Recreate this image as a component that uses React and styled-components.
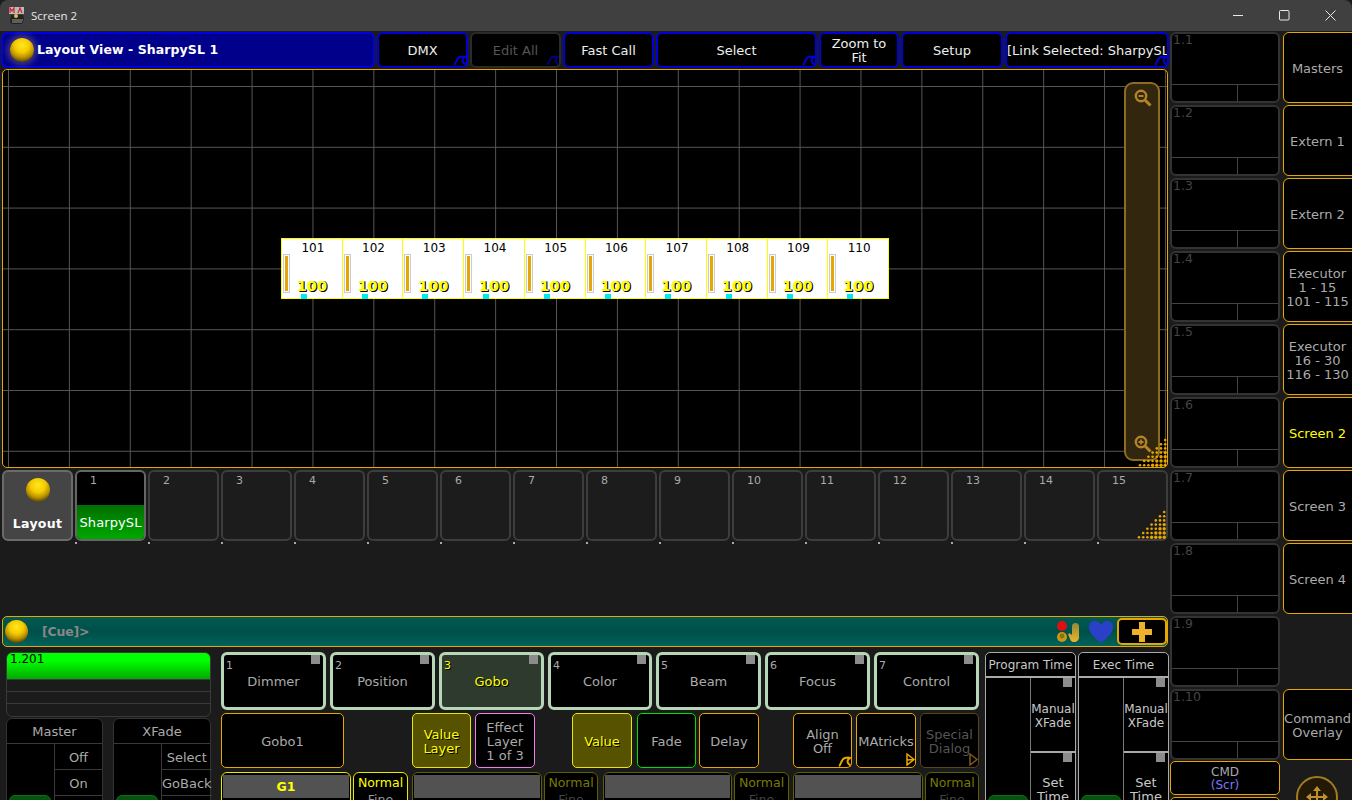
import React from 'react';
import styled, { createGlobalStyle } from 'styled-components';

const Global = createGlobalStyle`
  html, body { margin: 0; padding: 0; background: #1b1b1b; overflow: hidden; }
  * { box-sizing: border-box; }
`;

const AMBER = '#e8a600';

const Shell = styled.div`
  width: 1352px; height: 800px; overflow: hidden; display: flex; flex-direction: column;
  background: #1b1b1b; color: #aaa; font: 13px/14px "DejaVu Sans", sans-serif;
`;
const TitleBar = styled.header`
  height: 31px; flex: none; background: #404040; border-radius: 8px 8px 0 0; display: flex; align-items: center;
  padding-left: 9px; color: #e8e8e8; font: 11.5px "Open Sans", sans-serif;
`;
const AppName = styled.span`margin-left: 6px; flex: 1;`;
const WinBtn = styled.button`
  width: 46px; height: 31px; background: none; border: 0; padding: 0 0 0 3px; color: #e8e8e8; display: flex; align-items: center; justify-content: center;
`;
const Body = styled.div`display: flex; flex: none; padding-top: 1px; height: 769px;`;
const LeftPane = styled.main`width: 1170px; flex: none; display: flex; flex-direction: column;`;
const TopBar = styled.nav`display: flex; height: 36px; padding-left: 1px; gap: 2px; flex: none;`;
const TitleBtn = styled.div`
  width: 374px; flex: none; border: 2px solid #0000e0; border-radius: 6px; background: #00008b; display: flex; align-items: center; padding-left: 7px;
  color: #fff; font-weight: bold; letter-spacing: 0.08px; font-size: 12.5px;
`;
const TopBtn = styled.button`
  position: relative; width: ${p => p.$w}px; flex: none; padding: 2px 0 0; background: #000; border: 2px solid ${p => p.$off ? '#2a2a2a' : '#0000d8'}; border-radius: 6px;
  color: ${p => p.$off ? '#555' : '#eee'}; font: 13px/14px "DejaVu Sans", sans-serif; white-space: ${p => p.$clip ? 'nowrap' : 'pre-line'}; overflow: hidden;
  text-align: ${p => p.$clip ? 'left' : 'center'};
`;
const Curl = styled.svg`position: absolute; right: 0; bottom: 0; width: 13px; height: 11px; fill: none; stroke-width: 2;`;
const Ball = styled.span`
  display: block; flex: none; width: ${p => p.$s}px; height: ${p => p.$s}px; border-radius: 50%;
  background: radial-gradient(ellipse 72% 72% at 50% 30%, #ffe820 0%, #f5cb00 42%, #b89000 72%, #4a3c08 100%);
  ${p => p.$glow && 'box-shadow: 0 0 6px 3px rgba(150,130,120,.45);'}
`;
const TitleLabel = styled.span`margin-left: 3px;`;

const Canvas = styled.section`
  position: relative; flex: none; margin: 1px 0 0 2px; width: 1166px; height: 399px; overflow: hidden; border: 1px solid ${AMBER}; border-radius: 5px;
  background-color: #000;
  background-image: linear-gradient(to right, #555 1px, transparent 1px), linear-gradient(to bottom, #555 1px, transparent 1px);
  background-size: 60.9px 60.8px;
  background-position: 5px 16px;
`;
const FixtureRow = styled.div`
  position: absolute; left: 278px; top: 168px; width: 608px; height: 61px; display: flex; border: 1px solid #ffff00;
`;
const Fixture = styled.div`
  position: relative; flex: 1; background: #fff; border-right: 1px solid #ffff00; color: #000; text-align: center; padding: 2px 0 0 2px; font-size: 12px;
  &:last-child { border-right: 0; }
`;
const Level = styled.i`
  position: absolute; left: 1px; top: 15px; width: 7px; height: 39px; border: 1px solid #ccc; background: #e5a60a;
  box-shadow: inset 0 0 0 1px #fff;
`;
const Value = styled.b`
  position: absolute; left: 0; right: 0; top: 39px; text-align: center; color: #ff0; font: bold 14.5px/16px "DejaVu Sans", sans-serif;
  text-shadow: 1px 1px 0 #000, 1px 0 0 #333;
`;
const Tick = styled.i`position: absolute; bottom: -1px; left: 19px; width: 6px; height: 5px; background: #00eaea;`;
const ScrollStrip = styled.div`
  position: absolute; top: 12px; right: 7px; width: 36px; height: 379px; border: 2px solid #8d6c22; border-radius: 9px; background: #33260f;
  display: flex; flex-direction: column; justify-content: space-between; align-items: center; padding: 5px 0 6px 2px;
`;
const Corner = styled.svg`position: absolute; right: 0; bottom: 0; width: 30px; height: 30px; fill: ${AMBER};`;

const PresetRow = styled.div`display: flex; gap: 2px; margin: 2px 0 0 2px; height: 71px; flex: none;`;
const PresetType = styled.button`
  width: 71px; flex: none; background: #454545; border: 2px solid #6b6b6b; border-radius: 6px; display: flex; flex-direction: column; align-items: center; padding: 6px 0 0;
  color: #fff; font: bold 12.5px/14px "DejaVu Sans", sans-serif; gap: 15px; letter-spacing: .3px;
`;
const Preset = styled.div`
  position: relative; width: 71px; flex: none; background: #1c1c1c; border: 2px solid #3d3d3d; border-radius: 6px; color: #aaa; padding: 2px 0 0 13px; font-size: 11px; line-height: 13px;
  &::after { content: ''; position: absolute; left: -2px; bottom: -5px; width: 2px; height: 2px; background: #aaa; }
  ${p => p.$on && 'background: #000; border-color: #666;'}
`;
const PresetName = styled.div`
  position: absolute; left: 0; right: 0; bottom: 0; height: 34px; background: linear-gradient(#006e00, #00a800); color: #fff; font-size: 13px; line-height: 35px; text-align: center; border-radius: 0 0 4px 4px; letter-spacing: .1px;
`;
const CmdBar = styled.div`
  margin: 75px 0 0 2px; width: 1166px; height: 31px; flex: none; display: flex; align-items: center; border: 1px solid ${AMBER}; border-radius: 5px; padding-left: 2px;
  background: linear-gradient(#005a53, #00504a 50%, #00625a); color: #888; font-weight: bold; font-size: 12.5px;
`;
const Prompt = styled.span`margin-left: 14px; flex: 1; letter-spacing: -.2px;`;
const PlusBtn = styled.button`
  width: 50px; height: 27px; margin: 0 0 0 3px; background: #000; border: 2px solid ${AMBER}; border-radius: 5px; padding: 0; display: flex; align-items: center; justify-content: center;
`;

const Bottom = styled.div`display: flex; flex: none; margin-top: 5px; padding-left: 6px; height: 150px; overflow: hidden;`;
const LeftBlock = styled.div`width: 205px; flex: none; display: flex; flex-direction: column; gap: 1px;`;
const ExecBar = styled.div`
  height: 65px; border: 1px solid #3a3a3a; border-radius: 6px; overflow: hidden; display: grid; grid-template-rows: 26px 12px 12px 1fr; flex: none;
`;
const ExecBarTop = styled.div`background: linear-gradient(#00ff00 30%, #00a800); color: #000; font-size: 12px; padding-left: 3px; line-height: 12px;`;
const ExecBarLine = styled.div`border-top: 1px solid #3a3a3a;`;
const Pair = styled.div`display: flex; gap: 10px;`;
const Group = styled.div`
  width: ${p => p.$w}px; flex: none; height: 110px; background: #000; border: 1px solid #333; border-radius: 6px 6px 0 0; display: flex; flex-direction: column;
`;
const GroupHead = styled.div`height: 25px; flex: none; text-align: center; line-height: 26px; border-bottom: 1px solid #3a3a3a;`;
const GroupBody = styled.div`display: grid; grid-template-columns: 48px 1fr; flex: 1;`;
const FaderCol = styled.div`position: relative; border-right: 1px solid #3a3a3a;`;
const Handle = styled.i`position: absolute; left: 2px; right: 3px; top: 51px; height: 30px; border-radius: 6px 6px 0 0; background: #06530f; border: 1px solid #0d7018;`;
const SideCol = styled.div`display: flex; flex-direction: column;`;
const SideBtn = styled.div`height: 26px; flex: none; border-bottom: 1px solid #3a3a3a; text-align: center; line-height: 27px; white-space: nowrap; overflow: hidden;`;

const Center = styled.div`width: 758px; margin-left: 10px; flex: none; display: flex; flex-direction: column;`;
const TabRow = styled.div`display: flex; gap: 4px; height: 58px; flex: none;`;
const Tab = styled.div`
  position: relative; width: ${p => p.$w}px; flex: none; background: ${p => p.$on ? '#2f3a2f' : '#000'}; border: 3px solid #b7d6b7; border-radius: 6px; color: ${p => p.$on ? '#ff0' : '#aaa'};
  text-align: center; line-height: 54px; ${p => p.$on && 'text-shadow: 1px 1px 0 #000;'}
`;
const TabNum = styled.span`position: absolute; left: 2px; top: 5px; font-size: 11px; line-height: 12px;`;
const Flag = styled.i`position: absolute; top: 0; right: 3px; width: 9px; height: 9px; background: #8c8c8c;`;
const BtnRow = styled.div`display: flex; height: 55px; margin-top: 3px; flex: none;`;
const Btn = styled.div`
  position: relative; width: ${p => p.$w}px; margin-left: ${p => p.$gap || 0}px; flex: none; display: flex; align-items: center; justify-content: center; text-align: center; padding-top: 2px;
  border: 1.5px solid ${p => p.$c || AMBER}; border-radius: 5px; background: ${p => p.$on ? '#575200' : '#000'}; color: ${p => p.$on ? '#ff0' : p.$dim ? '#555' : '#aaa'};
  ${p => p.$on && 'text-shadow: 1px 1px 0 #000;'} line-height: 14px; font-size: 13px; white-space: pre-line;
`;
const Tri = styled.svg`position: absolute; right: -1px; bottom: 1px; width: 10px; height: 13px; fill: none; stroke-width: 1.5;`;
const ValRow = styled.div`display: flex; margin-top: 4px; height: 60px; flex: none;`;
const ValMain = styled.div`
  width: ${p => p.$w}px; margin-left: ${p => p.$gap || 0}px; flex: none; border: 1.5px solid ${p => p.$on ? '#e8e800' : '#5f5f00'}; border-radius: 6px; background: #000; padding: 2px 1px 0; height: 60px; color: #ff0; font-weight: bold;
`;
const ValFill = styled.div`height: 23px; background: #525252; text-align: center; line-height: 24px; font-size: 12.5px;`;
const ValMode = styled.div`
  width: ${p => p.$w}px; margin-left: 2px; flex: none; border: 1.5px solid ${p => p.$on ? '#e8e800' : '#5f5f00'}; border-radius: 6px; background: #000; color: ${p => p.$on ? '#ff0' : '#7a7a00'};
  text-align: center; padding-top: 1px; line-height: 17px; font-size: 12.5px;
`;
const ModeSub = styled.div`color: ${p => p.$on ? '#999' : '#444'};`;

const TimeBlock = styled.div`margin-left: 6px; width: 184px; flex: none; display: flex; gap: 2px;`;
const TimePanel = styled.div`
  width: 91px; height: 170px; flex: none; background: #000; border: 1px solid #aaa; border-radius: 5px; display: flex; flex-direction: column; color: #c8c8c8;
`;
const TimeHead = styled.div`height: 25px; flex: none; text-align: center; line-height: 25px; border-bottom: 2px solid #aaa; font-size: 12px; white-space: nowrap;`;
const TimeBody = styled.div`display: grid; grid-template-columns: 45px 1fr; flex: 1;`;
const TimeFader = styled.div`position: relative; border-right: 1px solid #777;`;
const TimeHandle = styled(Handle)`left: 2px; right: 2px; top: 117px;`;
const TimeBtn = styled.div`
  position: relative; height: 75px; border-bottom: 2px solid #aaa; display: flex; align-items: center; justify-content: center; text-align: center; font-size: 12px; line-height: 14px; padding-top: 2px;
  &:last-child { padding-top: 23px; align-items: flex-start; border: 0; line-height: 14px; font-size: 13px; }
`;
const TimeFlag = styled(Flag)`right: 3px;`;

const ExecCol = styled.div`width: 110px; margin-left: 0; flex: none; display: flex; flex-direction: column; gap: 2px;`;
const ExecCell = styled.div`
  height: 71px; flex: none; background: #000; border: 2px solid #333; border-radius: 6px; display: flex; flex-direction: column; color: #444; font-size: 12.5px;
`;
const ExecNum = styled.div`flex: 1; padding: 0 0 0 1px; line-height: 11px;`;
const ExecFoot = styled.div`height: 17px; flex: none; border-top: 1px solid #444; display: grid; grid-template-columns: 66px 1fr;`;
const ExecDiv = styled.div`border-right: 1px solid #444;`;
const Cmd = styled.div`
  height: 34px; margin-top: -1px; flex: none; background: #000; border: 1.5px solid ${AMBER}; border-radius: 5px; text-align: center; font-size: 12px; line-height: 13px; padding-top: 4px; color: #aaa;
`;
const Scr = styled.div`color: #7a7aff;`;
const CmdNext = styled.div`height: 30px; flex: none; background: #000; border: 1.5px solid ${AMBER}; border-radius: 5px;`;
const ViewCol = styled.div`width: 70px; margin-left: 2px; flex: none; display: flex; flex-direction: column; gap: 2px; padding-left: 1px; overflow: hidden;`;
const ViewBtn = styled.div`
  height: 71px; flex: none; width: 76px; margin-top: ${p => p.$gap || 0}px; background: #000; border: 1.5px solid ${AMBER}; border-radius: 6px; display: flex; align-items: center; justify-content: center; text-align: center;
  color: ${p => p.$on ? '#ff0' : '#aaa'}; padding: 2px 7px 0 0; font-size: 13px; line-height: 14px; white-space: pre-line;
`;
const Round = styled.div`
  width: 42px; height: 42px; margin: 14px 0 0 13px; flex: none; border-radius: 50%; border: 2px solid #a07d20; background: #221a07; display: flex; justify-content: center; padding-top: 8px;
`;

const Wave = ({ c }) => (
  <Curl viewBox="0 0 13 11" stroke={c}><path d="M1 10C3 9 3 3 7 2c3-1 5 0 5 0-2 1-3 3-2 5 .5 1 2 2 3 3" /></Curl>
);
const Mag = ({ plus }) => (
  <svg width="18" height="18" viewBox="0 0 18 18" fill="none" stroke="#b18426" strokeWidth="2.4">
    <circle cx="7" cy="7" r="5.2" />
    <path d="M11 11l5.5 5.5" strokeWidth="3" />
    <path d="M4.5 7h5" strokeWidth="1.8" />
    {plus && <path d="M7 4.5v5" strokeWidth="1.8" />}
  </svg>
);
const Dots = ({ n = 7 }) => {
  const out = [];
  for (let r = 0; r < n; r++) for (let c = 0; c < n; c++) if (r + c >= n - 1) out.push(<circle key={`${r}-${c}`} cx={c * 4.2 + 3} cy={r * 4.2 + 3} r={(r + c) > n + 1 ? 1.7 : 1.3} />);
  return <Corner viewBox="0 0 30 30">{out}</Corner>;
};
const AppIcon = () => (
  <svg width="16" height="18" viewBox="0 0 16 18">
    <rect x="0" y="0" width="15" height="7" fill="#bbb" />
    <path d="M1 6V1l2 3 2-3v5M9 6l2-5 2 5" stroke="#d02030" fill="none" strokeWidth="1.2" />
    <path d="M2 8h12l1 4-2 5H3l-2-2z" fill="#222" />
    <circle cx="7" cy="9" r="2" fill="#e5c040" />
    <path d="M3 13h11M3 15h10" stroke="#999" />
  </svg>
);

const TOP = [
  { t: 'DMX', w: 91, c: 1 }, { t: 'Edit All', w: 91, off: 1, c: 1 }, { t: 'Fast Call', w: 91 }, { t: 'Select', w: 161, c: 1 },
  { t: 'Zoom to\nFit', w: 80, c: 0 }, { t: 'Setup', w: 102 }, { t: '[Link Selected: SharpySL', w: 164, c: 1, clip: 1 },
];
const FIX = [101, 102, 103, 104, 105, 106, 107, 108, 109, 110];
const TABS = [['Dimmer', 105], ['Position', 105], ['Gobo', 105, 1], ['Color', 104], ['Beam', 105], ['Focus', 105], ['Control', 105]];
const VIEWS = ['Masters', 'Extern 1', 'Extern 2', 'Executor\n1 - 15\n101 - 115', 'Executor\n16 - 30\n116 - 130', 'Screen 2', 'Screen 3', 'Screen 4'];
const VALS = [[130, 0, 55, true, 'G1'], [130, 4, 54], [129, 5, 55], [130, 4, 54]];

export default function App() {
  return (
    <Shell>
      <Global />
      <TitleBar>
        <AppIcon />
        <AppName>Screen 2</AppName>
        <WinBtn><svg width="11" height="11" viewBox="0 0 11 11"><path d="M0 5.5h10" stroke="currentColor" /></svg></WinBtn>
        <WinBtn><svg width="11" height="11" viewBox="0 0 11 11"><rect x=".5" y=".5" width="9.5" height="9.5" rx="1" fill="none" stroke="currentColor" /></svg></WinBtn>
        <WinBtn><svg width="11" height="11" viewBox="0 0 11 11"><path d="M.5.5l10 10M10.5.5l-10 10" stroke="currentColor" /></svg></WinBtn>
      </TitleBar>
      <Body>
        <LeftPane>
          <TopBar>
            <TitleBtn><Ball $s={24} $glow /><TitleLabel>Layout View - SharpySL 1</TitleLabel></TitleBtn>
            {TOP.map(b => (
              <TopBtn key={b.t} $w={b.w} $off={b.off} $clip={b.clip}>{b.t}{b.c ? <Wave c={b.off ? '#00007a' : '#0000d8'} /> : null}</TopBtn>
            ))}
          </TopBar>
          <Canvas>
            <FixtureRow>
              {FIX.map(f => (
                <Fixture key={f}>{f}<Level /><Value>100</Value><Tick /></Fixture>
              ))}
            </FixtureRow>
            <ScrollStrip><Mag /><Mag plus /></ScrollStrip>
            <Dots />
          </Canvas>
          <PresetRow>
            <PresetType><Ball $s={24} />Layout</PresetType>
            {Array.from({ length: 15 }, (_, i) => (
              <Preset key={i} $on={i === 0}>
                {i + 1}
                {i === 0 && <PresetName>SharpySL</PresetName>}
                {i === 14 && <Dots />}
              </Preset>
            ))}
          </PresetRow>
          <CmdBar>
            <Ball $s={23} />
            <Prompt>[Cue]&gt;</Prompt>
            <svg width="27" height="24" viewBox="0 0 27 24">
              <defs>
                <linearGradient id="hand" x1="0" y1="0" x2="0" y2="1">
                  <stop offset="0" stopColor="#8f8a3a" />
                  <stop offset="1" stopColor="#ecb42a" />
                </linearGradient>
              </defs>
              <circle cx="7" cy="6" r="5" fill="#e01010" />
              <circle cx="7" cy="17" r="5" fill="#c89a10" />
              <circle cx="7" cy="16" r="2.4" fill="#8a7018" />
              <path d="M13 14.5l1.5-1.5 2.5 2V6.500a3.500 3.500 0 0 1 7 0V17c0 3-2 5-5 5h-1c-2 0-3-3-5-7.500z" fill="url(#hand)" />
            </svg>
            <svg width="26" height="24" viewBox="0 0 26 24" style={{ marginLeft: 6 }}>
              <path d="M13 23C7 18 1 13 1 7c0-7 9-8 12-2 3-6 12-5 12 2 0 6-6 11-12 16z" fill="#2a40c8" />
            </svg>
            <PlusBtn>
              <svg width="20" height="20" viewBox="0 0 20 20"><path d="M7 0h6v7h7v6h-7v7H7v-7H0V7h7z" fill="#efb02a" /></svg>
            </PlusBtn>
          </CmdBar>
          <Bottom>
            <LeftBlock>
              <ExecBar>
                <ExecBarTop>1.201</ExecBarTop><ExecBarLine /><ExecBarLine /><ExecBarLine />
              </ExecBar>
              <Pair>
                <Group $w={97}>
                  <GroupHead>Master</GroupHead>
                  <GroupBody>
                    <FaderCol><Handle /></FaderCol>
                    <SideCol><SideBtn>Off</SideBtn><SideBtn>On</SideBtn></SideCol>
                  </GroupBody>
                </Group>
                <Group $w={98}>
                  <GroupHead>XFade</GroupHead>
                  <GroupBody>
                    <FaderCol><Handle /></FaderCol>
                    <SideCol><SideBtn>Select</SideBtn><SideBtn>GoBack</SideBtn></SideCol>
                  </GroupBody>
                </Group>
              </Pair>
            </LeftBlock>
            <Center>
              <TabRow>
                {TABS.map(([t, w, on], i) => (
                  <Tab key={t} $w={w} $on={on}><TabNum>{i + 1}</TabNum><Flag />{t}</Tab>
                ))}
              </TabRow>
              <BtnRow>
                <Btn $w={123}>Gobo1</Btn>
                <Btn $w={59} $gap={68} $c="#e8e800" $on>{'Value\nLayer'}</Btn>
                <Btn $w={60} $gap={4} $c="#ee80ee">{'Effect\nLayer\n1 of 3'}</Btn>
                <Btn $w={60} $gap={37} $c="#e8e800" $on>Value</Btn>
                <Btn $w={59} $gap={5} $c="#00e000">Fade</Btn>
                <Btn $w={60} $gap={3}>Delay</Btn>
                <Btn $w={59} $gap={34}>{'Align\nOff'}<Wave c={AMBER} /></Btn>
                <Btn $w={60} $gap={4}>MAtricks<Tri viewBox="0 0 10 13" stroke={AMBER}><path d="M1 1l7 5.5L1 12zM1 7l7-.5" /></Tri></Btn>
                <Btn $w={59} $gap={4} $c="#5c4418" $dim>{'Special\nDialog'}<Tri viewBox="0 0 10 13" stroke="#7a5a18"><path d="M1 1l7 5.5L1 12z" /></Tri></Btn>
              </BtnRow>
              <ValRow>
                {VALS.map(([w, gap, mw, on, label], i) => (
                  <React.Fragment key={i}>
                    <ValMain $w={w} $gap={gap} $on={on}><ValFill>{label}</ValFill></ValMain>
                    <ValMode $w={mw} $on={on}>Normal<ModeSub $on={on}>Fine</ModeSub></ValMode>
                  </React.Fragment>
                ))}
              </ValRow>
            </Center>
            <TimeBlock>
              {['Program Time', 'Exec Time'].map(t => (
                <TimePanel key={t}>
                  <TimeHead>{t}</TimeHead>
                  <TimeBody>
                    <TimeFader><TimeHandle /></TimeFader>
                    <SideCol>
                      <TimeBtn><TimeFlag /><span>Manual<br />XFade</span></TimeBtn>
                      <TimeBtn><TimeFlag /><span>Set<br />Time</span></TimeBtn>
                    </SideCol>
                  </TimeBody>
                </TimePanel>
              ))}
            </TimeBlock>
          </Bottom>
        </LeftPane>
        <ExecCol>
          {Array.from({ length: 10 }, (_, i) => (
            <ExecCell key={i}>
              <ExecNum>1.{i + 1}</ExecNum>
              <ExecFoot><ExecDiv /><div /></ExecFoot>
            </ExecCell>
          ))}
          <Cmd>CMD<Scr>(Scr)</Scr></Cmd>
          <CmdNext />
        </ExecCol>
        <ViewCol>
          {VIEWS.map(v => <ViewBtn key={v} $on={v === 'Screen 2'}>{v}</ViewBtn>)}
          <ViewBtn $gap={73}>{'Command\nOverlay'}</ViewBtn>
          <Round>
            <svg width="22" height="22" viewBox="0 0 22 22"><path d="M11 0l4 5h-3v5h5V7l5 4-5 4v-3h-5v5h3l-4 5-4-5h3v-5H5v3l-5-4 5-4v3h5V5H7z" fill="#c0902a" /></svg>
          </Round>
        </ViewCol>
      </Body>
    </Shell>
  );
}
